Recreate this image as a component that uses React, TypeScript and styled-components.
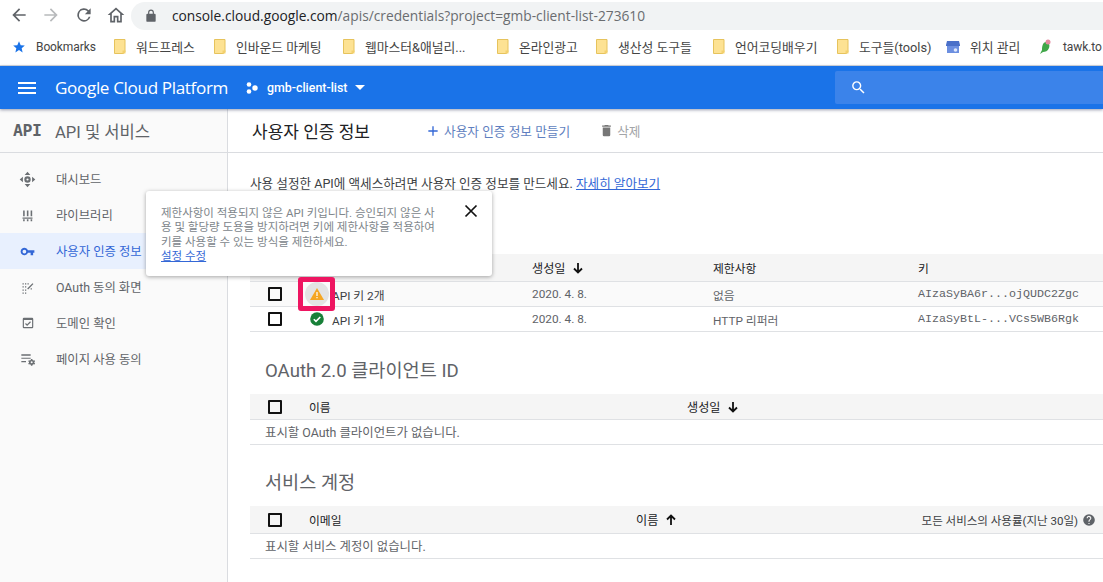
import React from "react";
import styled, { createGlobalStyle } from "styled-components";

const KR = `Roboto, "Noto Sans CJK KR", sans-serif`;

const Global = createGlobalStyle`
  html, body { margin: 0; padding: 0; background: #fff; }
  body { font-family: ${KR}; overflow: hidden; }
  * { box-sizing: border-box; }
`;

const Page = styled.div`
  width: 1103px; height: 582px; overflow: hidden; position: relative;
  display: flex; flex-direction: column; background: #fff;
`;
const AddressRow = styled.div`
  height: 30px; flex: none; display: flex; align-items: center; padding-left: 9px; background: #fff;
`;
const NavButtons = styled.div`
  width: 122px; display: flex; gap: 12.3px; align-items: center; flex: none; color: #5f6368;
`;
const UrlPill = styled.div`
  flex: 1; height: 28px; margin-top: 1px; background: #f1f3f4; border-radius: 14px 0 0 14px;
  display: flex; align-items: center; padding-left: 13px; gap: 14px;
  font: 13.76px "Open Sans", sans-serif; color: #6a6d70;
  b { font-weight: 400; color: #202124; }
`;
const BookmarkRow = styled.div`
  height: 36px; flex: none; display: flex; align-items: center; padding-bottom: 2px; border-bottom: 1px solid #d6dade; position: relative;
`;
const Bookmark = styled.div<{ $w: number; $lead?: boolean }>`
  width: ${p => p.$w}px; flex: none; display: flex; align-items: center; gap: 10px;
  padding-left: ${p => (p.$lead ? "12px" : "0")};
  font: 12.8px ${KR}; color: #444; white-space: nowrap; overflow: hidden;
`;
const BookmarkLatin = styled.span`
  font-size: 12px; letter-spacing: -.1px;
`;
const Header = styled.header`
  height: 43px; flex: none; background: #1a73e8; color: #fff; display: flex; align-items: center;
  box-shadow: 0 1px 3px rgba(30,40,80,.45); position: relative; z-index: 2;
`;
const Menu = styled.div`
  width: 55px; flex: none; display: flex; justify-content: center; padding-right: 1px;
`;
const Brand = styled.div`
  width: 191px; flex: none; font: 400 17.1px "Open Sans", sans-serif; letter-spacing: -.35px; white-space: nowrap;
`;
const Project = styled.div`
  width: 589px; flex: none; display: flex; align-items: center; gap: 9px;
  font: 500 12.4px Roboto, sans-serif;
`;
const Caret = styled.svg`
  margin-left: -1px;
`;
const Search = styled.div`
  flex: 1; height: 33px; background: #3b83ea; border-radius: 2px 0 0 2px; display: flex; align-items: center; padding-left: 15px;
`;
const Body = styled.div`
  flex: 1; display: flex; min-height: 0;
`;
const Side = styled.aside`
  width: 228px; flex: none; background: #fafafa; border-right: 1px solid #dadce0; display: flex; flex-direction: column;
`;
const SideTop = styled.div`
  height: 44px; flex: none; border-bottom: 1px solid #dadce0; display: flex; align-items: center; padding-left: 13px; gap: 14px;
  font: 16.6px ${KR}; color: #5f6368; white-space: nowrap;
`;
const ApiLogo = styled.span`
  font: 700 16.5px "DejaVu Sans Mono", monospace; color: #5f6368; letter-spacing: -.4px; width: 28px;
`;
const SideList = styled.nav`
  padding-top: 8px; display: flex; flex-direction: column;
`;
const SideItem = styled.div<{ $on?: boolean }>`
  height: 36px; display: flex; align-items: center; padding-left: 20px; gap: 21px;
  font: 12.35px ${KR}; color: ${p => (p.$on ? "#3367d6" : "#5f6368")};
  background: ${p => (p.$on ? "#e8f0fe" : "transparent")};
  white-space: nowrap;
`;
const IconSlot = styled.span`
  width: 15px; height: 17px; flex: none; display: flex; align-items: center; justify-content: center;
`;
const Main = styled.main`
  flex: 1; min-width: 0; display: flex; flex-direction: column;
`;
const TitleBar = styled.div`
  height: 44px; flex: none; border-bottom: 1px solid #dadce0; display: flex; align-items: center; padding-left: 24px;
`;
const Title = styled.h1`
  margin: 0; width: 173px; flex: none; font: 400 17px ${KR}; color: #202124; white-space: nowrap;
`;
const Action = styled.div<{ $muted?: boolean }>`
  display: flex; align-items: center; gap: 3px; font: 12.7px ${KR}; white-space: nowrap;
  color: ${p => (p.$muted ? "#a3a5a8" : "#5f7fc0")};
  margin-right: 29px;
`;
const Content = styled.div`
  padding: 23px 0 0 22px; display: flex; flex-direction: column;
`;
const Intro = styled.p`
  margin: 0 0 62px; height: 16px; font: 12.6px/16px ${KR}; color: #3c4043; white-space: nowrap;
  a { color: #3367d6; text-decoration: underline; }
`;
const SectionTitle = styled.h2<{ $h: number; $pad: number }>`
  margin: 0; height: ${p => p.$h}px; padding: ${p => p.$pad}px 0 0 15px; font: 400 18.6px/24px ${KR}; color: #5f6368; white-space: nowrap;
`;
const Row = styled.div<{ $cols: string; $h: number; $head?: boolean }>`
  display: grid; grid-template-columns: ${p => p.$cols}; height: ${p => p.$h}px; align-items: center;
  background: ${p => (p.$head ? "#f5f5f5" : "#fff")};
  border-bottom: 1px solid #dfe1e4;
  font: 11.8px ${KR}; color: ${p => (p.$head ? "#202124" : "#5f6368")};
  white-space: nowrap;
`;
const Selected = styled(Row)`
  background: #fafafa;
`;
const Check = styled.span`
  width: 14px; height: 14px; border: 2px solid #111; border-radius: 1px; margin-left: 18px; display: block;
`;
const Sort = styled.span`
  display: inline-flex; align-items: center; gap: 7px; font-size: 12.1px;
`;
const NameCell = styled.span<{ $plain?: boolean }>`
  display: flex; align-items: center; gap: 8px; color: #3c4043; padding-left: ${p => (p.$plain ? "22px" : "0")};
`;
const Mono = styled.span`
  font: 11.67px "Liberation Mono", monospace; color: #5f6368;
`;
const Empty = styled.div`
  padding-left: 15px; font: 12.4px ${KR}; color: #5f6368;
`;
const EmptyRow = styled.div`
  height: 25px; display: flex; align-items: center; border-bottom: 1px solid #dfe1e4;
`;
const Usage = styled.span`
  display: flex; justify-content: flex-end; align-items: center; gap: 4px; padding-right: 7px; color: #3c4043; font-size: 11.5px;
`;
const Tip = styled.div`
  position: absolute; left: 146px; top: 191px; width: 346px; height: 85px; background: #fff; border-radius: 3px;
  box-shadow: 0 1px 4px rgba(0,0,0,.35); padding: 15px 15px; z-index: 5;
  font: 11.5px/14.3px ${KR}; color: #80868b;
  a { color: #3367d6; text-decoration: underline; display: block; }
`;
const TipText = styled.div`
  width: 284px; word-break: break-all;
`;
const TipClose = styled.span`
  position: absolute; top: 13px; right: 14px; width: 14px; height: 14px; display: block;
`;
const Highlight = styled.div`
  position: absolute; left: 298px; top: 277px; width: 37px; height: 34px; border: 5px solid #ee1561; border-radius: 3px;
  background: #fafafa; z-index: 6; display: flex; align-items: center; justify-content: center;
`;
const WarnHalo = styled.span`
  width: 24px; height: 24px; border-radius: 50%; background: #e3e3e3; display: flex; align-items: center; justify-content: center;
`;

const Folder = () => (
  <svg width="12" height="15" viewBox="0 0 12 15" style={{ flex: "none" }}>
    <path d="M.5.5h10.5v12l-1.5 2H.5z" fill="#fde293" stroke="#e6c35c" />
    <path d="M8.5 11.5h3v3h-3z" fill="#f3d06d" />
  </svg>
);
const Arrow = ({ up }: { up?: boolean }) => (
  <svg width="12" height="12" viewBox="0 0 12 12" style={up ? { transform: "rotate(180deg)" } : undefined}>
    <path d="M6 1v9M2 6.5 6 10.5l4-4" fill="none" stroke="#111" strokeWidth="1.8" />
  </svg>
);
const Ico = ({ d, color = "#5f6368", size = 16 }: { d: string; color?: string; size?: number }) => (
  <svg width={size} height={size} viewBox="0 0 24 24" style={{ flex: "none" }}>
    <path d={d} fill={color} fillRule="evenodd" />
  </svg>
);
const Warn = () => (
  <svg width="14" height="12" viewBox="0 0 14 12">
    <path d="M7 0 14 12H0z" fill="#f5a623" />
    <path d="M6.4 4h1.2v4H6.4zM6.4 9h1.2v1.2H6.4z" fill="#fff" />
  </svg>
);
const Ok = () => (
  <svg width="14" height="14" viewBox="0 0 14 14">
    <circle cx="7" cy="7" r="6.8" fill="#188038" />
    <path d="M3.8 7.2 6 9.4l4.3-4.4" fill="none" stroke="#fff" strokeWidth="1.6" />
  </svg>
);

const bookmarks: [string, number][] = [
  ["워드프레스", 100], ["인바운드 마케팅", 129], ["웹마스터&애널리...", 154], ["온라인광고", 99],
  ["생산성 도구들", 117], ["언어코딩배우기", 124], ["도구들(tools)", 109],
];
const ICON = {
  dash: "M12 1 8 5.500h8zM1 12l4.500 4v-8zM23 12l-4.500-4v8zM12 23l4-4.500H8zM12 7.500a4.500 4.500 0 1 0 0 9 4.500 4.500 0 0 0 0-9zM12 10.500a1.500 1.500 0 1 1 0 3 1.500 1.500 0 0 1 0-3z",
  lib: "M5 4h2.500v9H5zM11 4h2.500v9H11zM17 4h2.500v9H17zM4 15h16v2H4zM5 18h2.500v3H5zM11 18h2.500v3H11zM17 18h2.500v3H17z",
  key: "M12.650 10A6 6 0 1 0 12.650 14H17v4h4v-4h2v-4zM7 15a3 3 0 1 1 0-6 3 3 0 0 1 0 6z",
  consent: "M4 5h2v2H4zM8 5h2v2H8zM12 5h2v2h-2zM4 10h2v2H4zM8 10h2v2H8zM4 15h2v2H4zM8 15h2v2H8zM4 20h2v2H4zM8 20h2v2H8zM20 5l1.500 1.500L13 15l-1.500-1.500zM17 13h2v2h-2z",
  domain: "M19 3H5a2 2 0 0 0-2 2v14a2 2 0 0 0 2 2h14a2 2 0 0 0 2-2V5a2 2 0 0 0-2-2zM19 19H5V7h14zM10.500 17l-3.500-3.500 1.400-1.400 2.100 2.100 5.100-5.100 1.400 1.400z",
  usage: "M2 5h14v2H2zM2 10h14v1.800H2zM2 15h7v1.800H2zM16.500 12h2l.4 1.600 1.300.7 1.500-.5 1 1.700-1.200 1.100v1l1.200 1.100-1 1.700-1.500-.5-1.300.7-.4 1.400h-2l-.4-1.400-1.300-.7-1.500.5-1-1.700 1.200-1.100v-1l-1.200-1.100 1-1.700 1.500.5 1.300-.7zM17.500 15.500a1.500 1.500 0 1 0 0 3 1.500 1.500 0 0 0 0-3z",
};
const side: [string, string, number][] = [
  ["대시보드", ICON.dash, 17], ["라이브러리", ICON.lib, 15], ["사용자 인증 정보", ICON.key, 15],
  ["OAuth 동의 화면", ICON.consent, 15], ["도메인 확인", ICON.domain, 14], ["페이지 사용 동의", ICON.usage, 16],
];
const KEY_COLS = "60px 222px 181px 205px 1fr";

export default function App() {
  return (
    <Page>
      <Global />
      <AddressRow>
        <NavButtons>
          <Ico size={20} d="M20 11H7.800l5.600-5.600L12 4l-8 8 8 8 1.400-1.400L7.800 13H20z" color="#5f6368" />
          <Ico size={20} d="M4 11h12.200l-5.600-5.600L12 4l8 8-8 8-1.400-1.400 5.600-5.600H4z" color="#b8babc" />
          <Ico size={20} d="M17.650 6.350A8 8 0 1 0 19.730 14h-2.080A6 6 0 1 1 12 6c1.660 0 3.140.69 4.220 1.780L13 11h7V4z" />
          <Ico size={20} d="M12 3 2 12h3v9h6v-6h2v6h6v-9h3zM17 19h-2v-6H9v6H7v-8.800l5-4.500 5 4.500z" />
        </NavButtons>
        <UrlPill>
          <Ico size={14} d="M18 8h-1V6a5 5 0 0 0-10 0v2H6a2 2 0 0 0-2 2v10a2 2 0 0 0 2 2h12a2 2 0 0 0 2-2V10a2 2 0 0 0-2-2zM9 6a3 3 0 0 1 6 0v2H9z" />
          <span><b>console.cloud.google.com</b>/apis/credentials?project=gmb-client-list-273610</span>
        </UrlPill>
      </AddressRow>
      <BookmarkRow>
        <Bookmark $w={114} $lead>
          <Ico size={14} color="#1a73e8" d="M12 2l2.900 6.900 7.100.6-5.400 4.700 1.600 7.300L12 17l-6.200 4.500 1.600-7.300L2 9.500l7.100-.6z" />
          <BookmarkLatin>Bookmarks</BookmarkLatin>
        </Bookmark>
        {bookmarks.map(([t, w]) => (
          <Bookmark key={t} $w={w}><Folder />{t}</Bookmark>
        ))}
        <Bookmark $w={93}>
          <svg width="14" height="14" viewBox="0 0 14 14" style={{ flex: "none" }}>
            <path d="M1 1h12l1 4v1H0V5z" fill="#4a70c9" />
            <rect x="1" y="6" width="12" height="7" fill="#6c8fe0" />
            <circle cx="9.5" cy="10" r="1.8" fill="#dfe8fb" />
          </svg>
          위치 관리
        </Bookmark>
        <Bookmark $w={64}>
          <svg width="14" height="16" viewBox="0 0 14 16" style={{ flex: "none" }}>
            <path d="M7 3c3 0 4 3 3 6s-4 4-6 4l-3 2 2-4c0-4 1-8 4-8z" fill="#3fa648" />
            <circle cx="9" cy="3" r="2.5" fill="#e48aa0" />
          </svg>
          <BookmarkLatin>tawk.to</BookmarkLatin>
        </Bookmark>
      </BookmarkRow>
      <Header>
        <Menu>
          <svg width="18" height="12" viewBox="0 0 18 12"><path d="M0 0h18v2H0zM0 5h18v2H0zM0 10h18v2H0z" fill="#fff" /></svg>
        </Menu>
        <Brand>Google Cloud Platform</Brand>
        <Project>
          <svg width="12" height="12" viewBox="0 0 12 12" fill="#fff">
            <circle cx="3" cy="2.5" r="2.3" /><circle cx="3" cy="9.5" r="2.3" /><circle cx="9" cy="6" r="2.7" />
          </svg>
          gmb-client-list
          <Caret width="10" height="5" viewBox="0 0 10 5"><path d="M0 0h10L5 5z" fill="#fff" /></Caret>
        </Project>
        <Search>
          <Ico size={17} color="#fff" d="M15.500 14h-.79l-.28-.27A6.471 6.471 0 0 0 16 9.500 6.500 6.500 0 1 0 9.500 16c1.610 0 3.090-.59 4.230-1.570l.27.28v.79l5 4.990L20.490 19l-4.990-5zM9.500 14C7.010 14 5 11.990 5 9.500S7.010 5 9.500 5 14 7.010 14 9.500 11.990 14 9.500 14z" />
        </Search>
      </Header>
      <Body>
        <Side>
          <SideTop><ApiLogo>API</ApiLogo>API 및 서비스</SideTop>
          <SideList>
            {side.map(([t, d, size], i) => (
              <SideItem key={t} $on={i === 2}>
                <IconSlot><Ico d={d} color={i === 2 ? "#3367d6" : "#6b6f73"} size={size} /></IconSlot>
                {t}
              </SideItem>
            ))}
          </SideList>
        </Side>
        <Main>
          <TitleBar>
            <Title>사용자 인증 정보</Title>
            <Action>
              <Ico size={16} color="#3367d6" d="M19 13h-6v6h-2v-6H5v-2h6V5h2v6h6z" />
              사용자 인증 정보 만들기
            </Action>
            <Action $muted>
              <Ico size={15} color="#777" d="M6 19a2 2 0 0 0 2 2h8a2 2 0 0 0 2-2V7H6zM19 4h-3.500l-1-1h-5l-1 1H5v2h14z" />
              삭제
            </Action>
          </TitleBar>
          <Content>
            <Intro>사용 설정한 API에 액세스하려면 사용자 인증 정보를 만드세요. <a>자세히 알아보기</a></Intro>
            <Row $cols={KEY_COLS} $h={28} $head>
              <Check /><span>이름</span>
              <Sort>생성일 <Arrow /></Sort><span>제한사항</span><span>키</span>
            </Row>
            <Selected $cols={KEY_COLS} $h={25}>
              <Check />
              <NameCell $plain>API 키 2개</NameCell>
              <span>2020. 4. 8.</span><span>없음</span><Mono>AIzaSyBA6r...ojQUDC2Zgc</Mono>
            </Selected>
            <Row $cols={KEY_COLS} $h={25}>
              <Check />
              <NameCell><Ok />API 키 1개</NameCell>
              <span>2020. 4. 8.</span><span>HTTP 리퍼러</span><Mono>AIzaSyBtL-...VCs5WB6Rgk</Mono>
            </Row>
            <SectionTitle $h={62} $pad={27}>OAuth 2.0 클라이언트 ID</SectionTitle>
            <Row $cols="59px 378px 1fr" $h={26} $head>
              <Check /><span>이름</span><Sort>생성일 <Arrow /></Sort>
            </Row>
            <EmptyRow><Empty>표시할 OAuth 클라이언트가 없습니다.</Empty></EmptyRow>
            <SectionTitle $h={61} $pad={26}>서비스 계정</SectionTitle>
            <Row $cols="59px 327px 1fr 200px" $h={28} $head>
              <Check /><span>이메일</span><Sort>이름 <Arrow up /></Sort>
              <Usage>
                모든 서비스의 사용률(지난 30일)
                <Ico size={14} color="#5f6368" d="M12 2a10 10 0 1 0 0 20 10 10 0 0 0 0-20zM13 19h-2v-2h2zM15.100 11.300l-.9.9c-.7.7-1.200 1.300-1.200 2.800h-2v-.5c0-1.100.5-2.100 1.200-2.800l1.200-1.300A2 2 0 1 0 10 9H8a4 4 0 1 1 7.100 2.300z" />
              </Usage>
            </Row>
            <EmptyRow><Empty>표시할 서비스 계정이 없습니다.</Empty></EmptyRow>
          </Content>
        </Main>
      </Body>
      <Tip>
        <TipText>
          제한사항이 적용되지 않은 API 키입니다. 승인되지 않은 사용 및 할당량 도용을 방지하려면 키에 제한사항을 적용하여 키를 사용할 수 있는 방식을 제한하세요.
          <a>설정 수정</a>
        </TipText>
        <TipClose>
          <svg width="14" height="14" viewBox="0 0 14 14"><path d="M1.500 1.500l11 11M12.500 1.500l-11 11" stroke="#111" strokeWidth="1.700" /></svg>
        </TipClose>
      </Tip>
      <Highlight><WarnHalo><Warn /></WarnHalo></Highlight>
    </Page>
  );
}
